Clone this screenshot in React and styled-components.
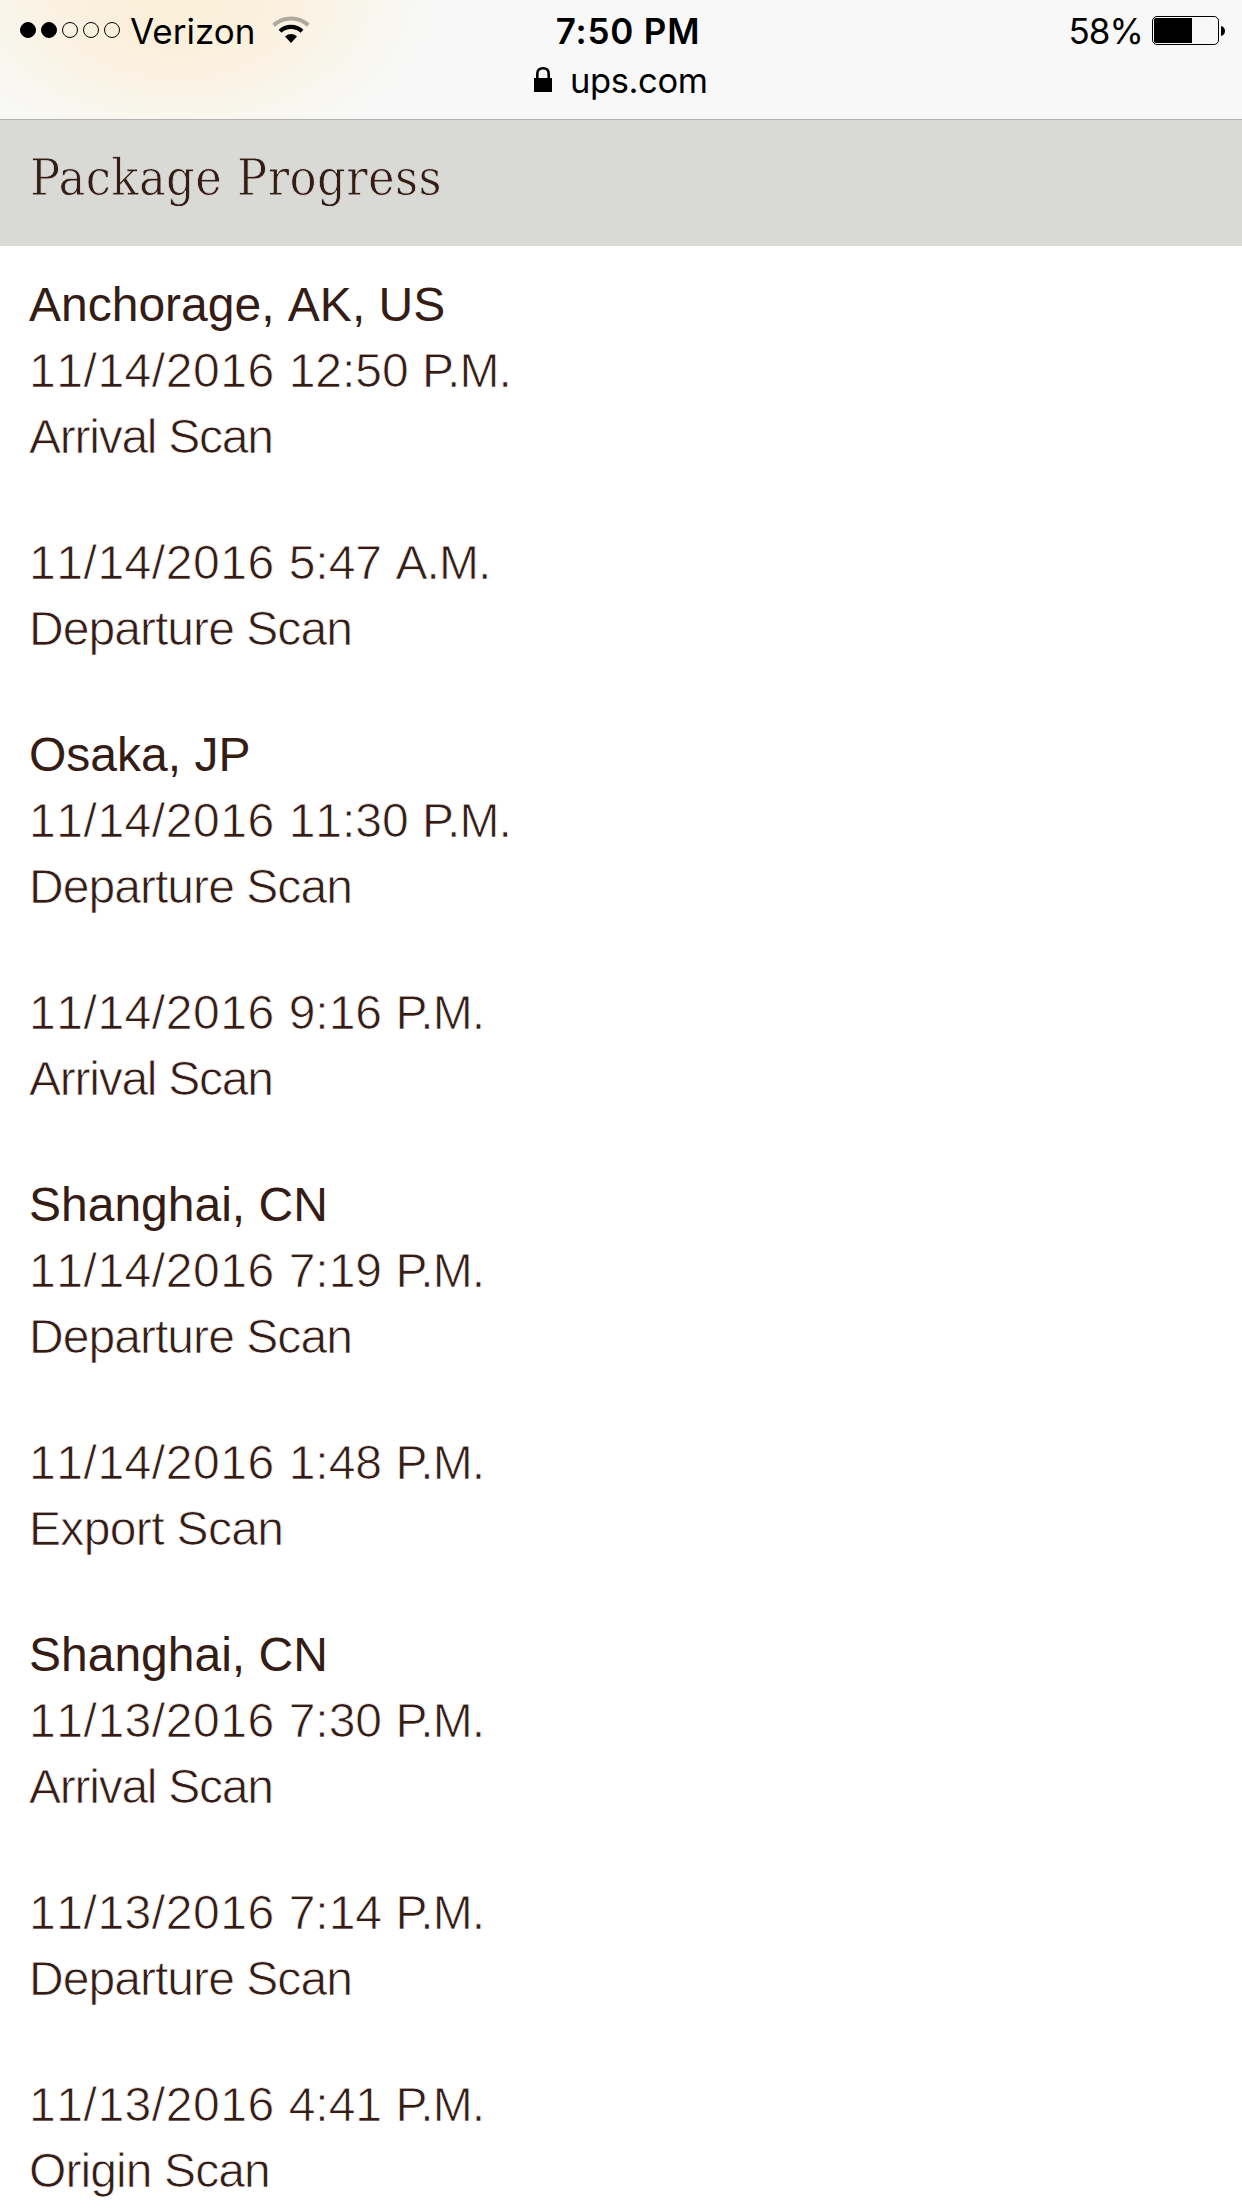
import React from "react";
import styled, { createGlobalStyle } from "styled-components";

const GlobalStyle = createGlobalStyle`
  * { box-sizing: border-box; }
  body { margin: 0; background: #fff; }
`;

const Screen = styled.div`
  width: 1242px;
  height: 2208px;
  overflow: hidden;
  background: #fff;
`;

const TopBar = styled.header`
  height: 120px;
  border-bottom: 1px solid #b1b1b0;
  color: #000;
  font-family: Inter, Roboto, sans-serif;
  background:
    radial-gradient(ellipse 265px 170px at 178px -4px, #faefd8 0%, #faf0dc 30%, #fbf2e4 50%, #f9f5e9 64%, #f8f7f2 82%, #f8f8f8 100%),
    #f8f8f8;
`;

const StatusRow = styled.div`
  height: 62px;
  padding: 0 17px 0 20px;
  display: grid;
  grid-template-columns: 1fr auto 1fr;
  align-items: center;
`;

const Cluster = styled.div`
  display: flex;
  align-items: center;
  justify-content: ${(p) => (p.$end ? "flex-end" : "flex-start")};
`;

const Signal = styled.div`
  display: flex;
  gap: 5px;
  margin: -2px 10px 0 0;
`;

const Dot = styled.i`
  width: 16px;
  height: 16px;
  border-radius: 50%;
  border: 1px solid #000;
  background: ${(p) => (p.$on ? "#000" : "transparent")};
`;

const StatusText = styled.span`
  font-size: 35px;
  line-height: 42px;
  white-space: nowrap;
  letter-spacing: ${(p) => p.$spacing || 0}px;
`;

const Clock = styled(StatusText)`
  padding-left: 11px;
  font-weight: 600;
`;

const WifiIcon = styled.svg`
  width: 38px;
  height: 28px;
  margin: -3px 0 0 17px;
`;

const BatteryIcon = styled.svg`
  width: 73px;
  height: 29px;
  margin: -1px 0 0 9px;
`;

const AddressRow = styled.div`
  height: 38px;
  padding-left: 534px;
  display: flex;
  align-items: center;
`;

const LockIcon = styled.svg`
  width: 18px;
  height: 25px;
  margin: -3px 18px 0 0;
`;

const Address = styled.span`
  font-size: 34.5px;
  line-height: 38px;
  letter-spacing: -0.4px;
`;

const SectionHeader = styled.section`
  height: 126px;
  padding: 23px 30px 0;
  background: #d9dad5;
`;

const Title = styled.h1`
  margin: 0;
  font: 400 50px/70px "DejaVu Serif";
  font-family: "DejaVu Serif Condensed", "DejaVu Serif", serif;
  font-stretch: condensed;
  letter-spacing: 0.4px;
  color: #351c15;
  -webkit-text-stroke: 0.8px #d9dad5;
`;

const Progress = styled.main`
  padding: 26px 29px 0;
  display: flex;
  flex-direction: column;
  gap: 60px;
  color: #351c15;
  font-family: "Liberation Sans", Arial, sans-serif;
  font-size: 48px;
  line-height: 66px;
`;

const Scan = styled.article`
  display: flex;
  flex-direction: column;
`;

const Place = styled.h2`
  margin: 0;
  font: inherit;
  font-kerning: none;
  letter-spacing: 0;
`;

const Line = styled.p`
  margin: 0;
  white-space: pre;
  letter-spacing: ${(p) => p.$spacing || 0}px;
  -webkit-text-stroke: 0.75px #fff;
`;

const Part = styled.span`
  font-kerning: ${(p) => (p.$kern ? "normal" : "none")};
  letter-spacing: ${(p) => p.$spacing}px;
`;

const eventSpacing = {
  "Arrival Scan": -1.25,
  "Departure Scan": -0.95,
  "Export Scan": -0.65,
  "Origin Scan": -0.9,
};

const scans = [
  { place: "Anchorage, AK, US", time: "11/14/2016 12:50 P.M.", event: "Arrival Scan" },
  { time: "11/14/2016 5:47 A.M.", event: "Departure Scan" },
  { place: "Osaka, JP", time: "11/14/2016 11:30 P.M.", event: "Departure Scan" },
  { time: "11/14/2016 9:16 P.M.", event: "Arrival Scan" },
  { place: "Shanghai, CN", time: "11/14/2016 7:19 P.M.", event: "Departure Scan" },
  { time: "11/14/2016 1:48 P.M.", event: "Export Scan" },
  { place: "Shanghai, CN", time: "11/13/2016 7:30 P.M.", event: "Arrival Scan" },
  { time: "11/13/2016 7:14 P.M.", event: "Departure Scan" },
  { time: "11/13/2016 4:41 P.M.", event: "Origin Scan" },
];

function Timestamp({ value }) {
  const [date, clock, half] = value.split(" ");
  return (
    <Line>
      <Part $spacing={0.55}>{date + " "}</Part>
      <Part $spacing={0}>{clock + " "}</Part>
      <Part $kern $spacing={-0.9}>{half}</Part>
    </Line>
  );
}

export default function App() {
  return (
    <Screen>
      <GlobalStyle />
      <TopBar>
        <StatusRow>
          <Cluster>
            <Signal>
              {[1, 1, 0, 0, 0].map((on, i) => (
                <Dot key={i} $on={on} />
              ))}
            </Signal>
            <StatusText>Verizon</StatusText>
            <WifiIcon viewBox="0 0 38 28" fill="none">
              <path d="M1.7 9.2 A25.5 25.5 0 0 1 36.3 9.2" stroke="#aeaaa0" strokeWidth="4" />
              <path d="M8 15.2 A16.4 16.4 0 0 1 30 15.2" stroke="#000" strokeWidth="4.2" />
              <path d="M13 20.4 Q19 15.6 25 20.4 L19 27 Z" fill="#000" />
            </WifiIcon>
          </Cluster>
          <Clock $spacing={0.8}>7:50 PM</Clock>
          <Cluster $end>
            <StatusText $spacing={-0.9}>58%</StatusText>
            <BatteryIcon viewBox="0 0 73 29" fill="none">
              <rect x="0.5" y="0.5" width="66" height="28" rx="4.5" stroke="#000" />
              <path d="M4 2 H40 V27 H4 Q2 27 2 25 V4 Q2 2 4 2Z" fill="#000" />
              <path d="M69 10 Q73 11 73 15 Q73 19 69 20Z" fill="#000" />
            </BatteryIcon>
          </Cluster>
        </StatusRow>
        <AddressRow>
          <LockIcon viewBox="0 0 18 25" fill="none">
            <rect y="11" width="18" height="14" fill="#000" />
            <path d="M3.3 12 V7 Q3.3 1.3 9 1.3 Q14.7 1.3 14.7 7 V12" stroke="#000" strokeWidth="2.6" />
          </LockIcon>
          <Address>ups.com</Address>
        </AddressRow>
      </TopBar>
      <SectionHeader>
        <Title>Package Progress</Title>
      </SectionHeader>
      <Progress>
        {scans.map((s) => (
          <Scan key={s.time}>
            {s.place && <Place>{s.place}</Place>}
            <Timestamp value={s.time} />
            <Line $spacing={eventSpacing[s.event]}>{s.event}</Line>
          </Scan>
        ))}
      </Progress>
    </Screen>
  );
}
